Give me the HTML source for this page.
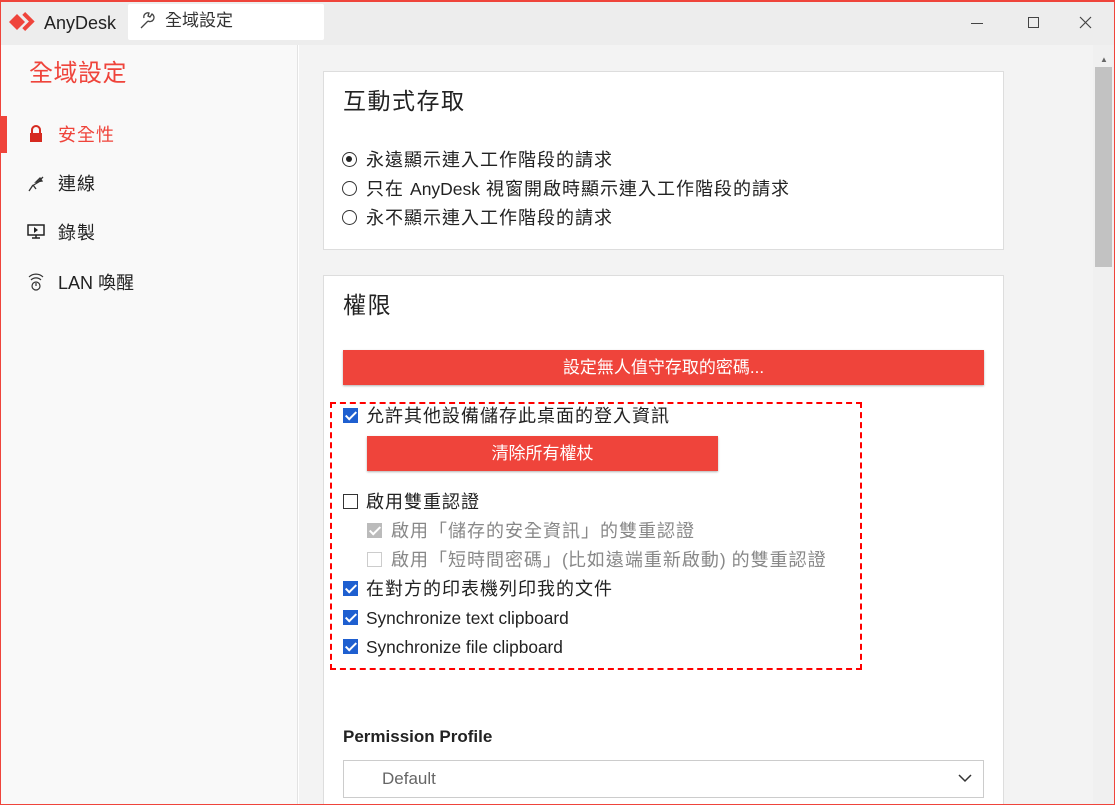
<!DOCTYPE html>
<html><head><meta charset="utf-8"><style>
*{box-sizing:border-box;margin:0;padding:0}
html,body{width:1115px;height:805px;overflow:hidden}
body{font-family:"Liberation Sans","Noto Sans CJK TC",sans-serif;background:#fff;position:relative}
.win{position:absolute;left:0;top:0;width:1115px;height:805px;border:1px solid #ef443b;border-top:2px solid #ef443b}
.title{position:absolute;left:0;top:0;width:1115px;height:45px;background:#ededed}
.side{position:absolute;left:1px;top:45px;width:297px;height:760px;background:#f9f9f9;border-right:1px solid #e3e3e3}
.main{position:absolute;left:299px;top:45px;width:794px;height:760px;background:#f3f3f3}
.sb{position:absolute;left:1093px;top:45px;width:21px;height:760px;background:#f0f0f0}
.card{position:absolute;background:#fff;border:1px solid #ddd}
.t{position:absolute;font-size:18px;color:#222;white-space:nowrap;line-height:22px}
.c{letter-spacing:1px}
.l{letter-spacing:0;font-size:17.5px}
.cb{position:absolute;width:15px;height:15px;border:1.5px solid #333;background:#fff}
.cb.on{background:#1e5fd0;border-color:#1e5fd0}
.cb.on:after{content:"";position:absolute;left:4px;top:0px;width:4px;height:9px;border:solid #fff;border-width:0 2px 2px 0;transform:rotate(45deg)}
.cb.dis{background:#bbb;border-color:#bbb}
.cb.dis2{border-color:#ccc}
.rad{position:absolute;width:15px;height:15px;border:1.5px solid #333;border-radius:50%}
.btn{position:absolute;background:#ef443b;color:#fff;font-size:17px;text-align:center;box-shadow:0 1px 2px rgba(0,0,0,.3)}
</style></head><body>
<div class="title"></div>
<svg style="position:absolute;left:8px;top:12px" width="30" height="20"><path d="M1 10 L9 2 L17 10 L9 18Z" fill="#ef443b"/><path d="M14 3 L21 10 L14 17 L17 20 L27 10 L17 0Z" fill="#ef443b" transform="translate(1,0) scale(.95)"/></svg>
<div class="t" style="left:44px;top:12px;font-size:18px;color:#222">AnyDesk</div>
<div style="position:absolute;left:128px;top:4px;width:196px;height:36px;background:#fff;border-radius:2px"></div>
<svg style="position:absolute;left:138px;top:11px" width="20" height="20"><path d="M3 17 L10 10 M10 10 a4 4 0 1 0 4 -7 l-2 3 -2 -1 1 -3 a4 4 0 0 0 -5 5" fill="none" stroke="#444" stroke-width="1.3"/></svg>
<div class="t" style="left:165px;top:10px;font-size:17px;color:#333">全域設定</div>
<div style="position:absolute;left:971px;top:23px;width:12px;height:1px;background:#444"></div>
<div style="position:absolute;left:1028px;top:17px;width:11px;height:11px;border:1px solid #444"></div>
<svg style="position:absolute;left:1079px;top:16px" width="13" height="13"><path d="M1 1 L12 12 M12 1 L1 12" stroke="#444" stroke-width="1.2"/></svg>
<div class="side"></div>
<div class="t" style="left:29px;top:60px;font-size:24px;line-height:28px;color:#ef443b;letter-spacing:.5px">全域設定</div>
<div style="position:absolute;left:1px;top:116px;width:6px;height:37px;background:#ef443b"></div>
<svg style="position:absolute;left:28px;top:124px" width="16" height="20"><path d="M4 9 V6 a4 4 0 0 1 8 0 V9" fill="none" stroke="#d62a20" stroke-width="2"/><rect x="2" y="9" width="12" height="9" fill="#d62a20"/></svg>
<div class="t c" style="left:58px;top:124px;color:#ef443b">安全性</div>
<svg style="position:absolute;left:27px;top:173px" width="20" height="20"><path d="M2 18 L6 12 M6 12 L9 16 Z M10 10 L16 4 M9 9 L13 5 L15 8 Z M5 13 L15 7" fill="none" stroke="#333" stroke-width="1.3"/></svg>
<div class="t c" style="left:58px;top:173px;color:#222">連線</div>
<svg style="position:absolute;left:27px;top:224px" width="18" height="16"><rect x="1" y="1" width="16" height="10" fill="none" stroke="#222" stroke-width="1.5"/><path d="M7 3 L11 6 L7 9Z" fill="#222"/><path d="M9 11 V14 M5 14 H13" stroke="#222" stroke-width="1.5"/></svg>
<div class="t c" style="left:58px;top:222px;color:#222">錄製</div>
<svg style="position:absolute;left:27px;top:271px" width="18" height="22"><path d="M2 6 a10 10 0 0 1 14 0 M4 9 a7 7 0 0 1 10 0" fill="none" stroke="#333" stroke-width="1.2"/><circle cx="9" cy="15" r="4" fill="none" stroke="#333" stroke-width="1.2"/><path d="M9 12 V15" stroke="#333" stroke-width="1.2"/></svg>
<div class="t" style="left:58px;top:272px;color:#222">LAN 喚醒</div>
<div class="main"></div>
<div class="sb"><div style="position:absolute;left:7px;top:10px;font-size:8px;color:#666">▲</div><div style="position:absolute;left:2px;top:22px;width:17px;height:200px;background:#c2c2c2"></div></div>
<div class="card" style="left:323px;top:71px;width:681px;height:179px"></div>
<div class="t" style="left:343px;top:87px;font-size:23px;line-height:28px;letter-spacing:1.5px">互動式存取</div>
<div class="rad" style="left:342px;top:152px"><div style="position:absolute;left:3px;top:3px;width:6px;height:6px;border-radius:50%;background:#222"></div></div>
<div class="t c" style="left:366px;top:149px">永遠顯示連入工作階段的請求</div>
<div class="rad" style="left:342px;top:181px"></div>
<div class="t c" style="left:366px;top:178px">只在 <span class="l">AnyDesk</span> 視窗開啟時顯示連入工作階段的請求</div>
<div class="rad" style="left:342px;top:210px"></div>
<div class="t c" style="left:366px;top:207px">永不顯示連入工作階段的請求</div>
<div class="card" style="left:323px;top:275px;width:681px;height:535px"></div>
<div class="t" style="left:343px;top:291px;font-size:23px;line-height:28px;letter-spacing:1.5px">權限</div>
<div class="btn" style="left:343px;top:350px;width:641px;height:35px;line-height:35px">設定無人值守存取的密碼...</div>
<div style="position:absolute;left:330px;top:402px;width:532px;height:268px;border:2px dashed #f00"></div>
<div class="cb on" style="left:343px;top:408px"></div>
<div class="t c" style="left:366px;top:405px">允許其他設備儲存此桌面的登入資訊</div>
<div class="btn" style="left:367px;top:436px;width:351px;height:35px;line-height:35px">清除所有權杖</div>
<div class="cb" style="left:343px;top:494px"></div>
<div class="t c" style="left:366px;top:491px">啟用雙重認證</div>
<div class="cb on dis" style="left:367px;top:523px"></div>
<div class="t c" style="left:391px;top:520px;color:#888">啟用「儲存的安全資訊」的雙重認證</div>
<div class="cb dis2" style="left:367px;top:552px"></div>
<div class="t c" style="left:391px;top:549px;color:#888">啟用「短時間密碼」<span class="l">(</span>比如遠端重新啟動<span class="l">)</span> 的雙重認證</div>
<div class="cb on" style="left:343px;top:581px"></div>
<div class="t c" style="left:366px;top:578px">在對方的印表機列印我的文件</div>
<div class="cb on" style="left:343px;top:610px"></div>
<div class="t" style="left:366px;top:607px;font-size:17.3px">Synchronize text clipboard</div>
<div class="cb on" style="left:343px;top:639px"></div>
<div class="t" style="left:366px;top:636px;font-size:17.3px">Synchronize file clipboard</div>
<div class="t" style="left:343px;top:726px;font-weight:bold;font-size:17px">Permission Profile</div>
<div style="position:absolute;left:343px;top:760px;width:641px;height:38px;border:1px solid #ccc;background:#fff"></div>
<div class="t" style="left:382px;top:768px;color:#666;font-size:17px">Default</div>
<svg style="position:absolute;left:958px;top:773px" width="14" height="10"><path d="M1 2 L7 8 L13 2" fill="none" stroke="#333" stroke-width="1.5"/></svg>
<div class="win"></div>
</body></html>
